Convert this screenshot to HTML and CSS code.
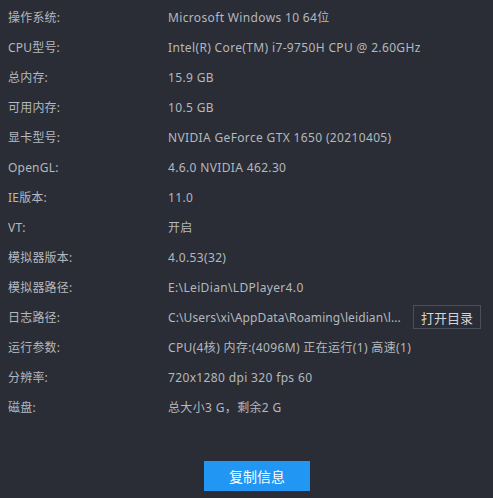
FILE: index.html
```html
<!DOCTYPE html>
<html>
<head>
<meta charset="utf-8">
<link rel="stylesheet" href="styles.css">
</head>
<body>
<div class="panel">
  <div class="rows">
    <div class="row"><div class="label">操作系统:</div><div class="value">Microsoft Windows 10 64位</div></div>
    <div class="row"><div class="label">CPU型号:</div><div class="value">Intel(R) Core(TM) i7-9750H CPU @ 2.60GHz</div></div>
    <div class="row"><div class="label">总内存:</div><div class="value">15.9 GB</div></div>
    <div class="row"><div class="label">可用内存:</div><div class="value">10.5 GB</div></div>
    <div class="row"><div class="label">显卡型号:</div><div class="value">NVIDIA GeForce GTX 1650 (20210405)</div></div>
    <div class="row"><div class="label">OpenGL:</div><div class="value">4.6.0 NVIDIA 462.30</div></div>
    <div class="row"><div class="label">IE版本:</div><div class="value">11.0</div></div>
    <div class="row"><div class="label">VT:</div><div class="value">开启</div></div>
    <div class="row"><div class="label">模拟器版本:</div><div class="value">4.0.53(32)</div></div>
    <div class="row"><div class="label">模拟器路径:</div><div class="value">E:\LeiDian\LDPlayer4.0</div></div>
    <div class="row"><div class="label">日志路径:</div><div class="value path">C:\Users\xi\AppData\Roaming\leidian\l...</div><button class="open-btn">打开目录</button></div>
    <div class="row"><div class="label">运行参数:</div><div class="value">CPU(4核) 内存:(4096M) 正在运行(1) 高速(1)</div></div>
    <div class="row"><div class="label">分辨率:</div><div class="value">720x1280 dpi 320 fps 60</div></div>
    <div class="row"><div class="label">磁盘:</div><div class="value">总大小3 G，剩余2 G</div></div>
  </div>
  <div class="footer"><button class="copy-btn">复制信息</button></div>
</div>
</body>
</html>
```
FILE: styles.css
```css
html, body {
  margin: 0;
  padding: 0;
  background: #2a2d35;
}
body {
  font-family: "Noto Sans", "Noto Sans CJK SC", sans-serif;
  font-size: 12px;
  color: #b4b8bf;
  width: 493px;
  height: 498px;
  overflow: hidden;
}
.panel {
  display: flex;
  flex-direction: column;
  height: 498px;
}
.rows {
  display: flex;
  flex-direction: column;
  padding-top: 2px;
}
.row {
  display: flex;
  align-items: center;
  height: 30px;
}
.label {
  width: 160px;
  padding-left: 8px;
  flex-shrink: 0;
  letter-spacing: 0.2px;
}
.value {
  white-space: nowrap;
  letter-spacing: 0.35px;
}
.path {
  width: 245px;
  flex-shrink: 0;
  letter-spacing: 0.1px;
}
.open-btn {
  margin-left: 0;
  width: 68px;
  height: 24px;
  background: transparent;
  border: 1px solid #4b4f58;
  color: #d2d5da;
  font-family: inherit;
  font-size: 13px;
  padding: 0;
}
.footer {
  display: flex;
  justify-content: center;
  padding-top: 39px;
}
.copy-btn {
  width: 106px;
  height: 30px;
  background: #2196f3;
  border: none;
  color: #ffffff;
  font-family: inherit;
  font-size: 14px;
  padding: 0;
  margin-left: 21px;
}
```
